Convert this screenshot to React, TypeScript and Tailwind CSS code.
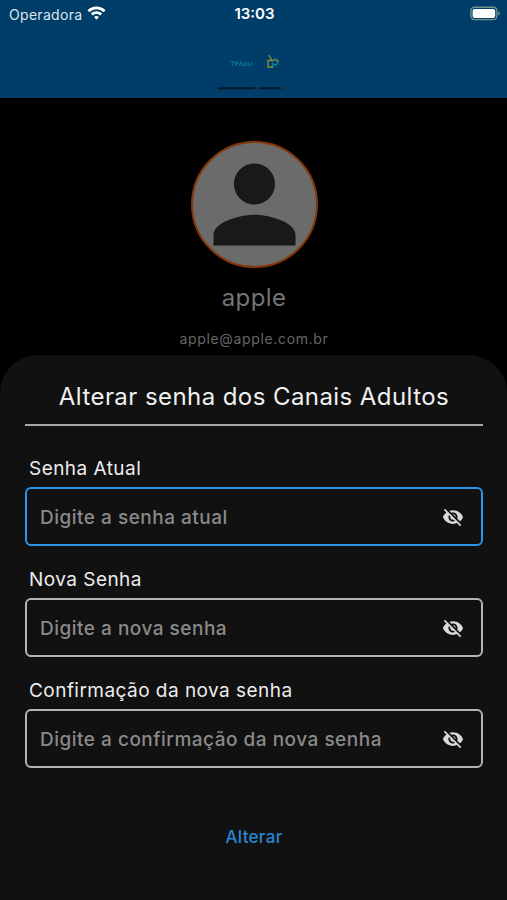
import { useState } from "react";
import { MdPerson, MdVisibility, MdVisibilityOff } from "react-icons/md";

interface PasswordFieldProps {
  id: string;
  label: string;
  placeholder: string;
  active?: boolean;
}

function StatusBar() {
  return (
    <div className="flex h-7 items-center justify-between pl-[9px] pr-[7px] text-white">
      <div className="flex w-[120px] items-center gap-[5px]">
        <span className="text-[14px] tracking-[0.3px] text-[#dce5ec]">Operadora</span>
        <svg width="19" height="15" viewBox="0 0 19 15" fill="white" className="mb-[2px]">
          <path d="M9.5 0.6c3.4 0 6.6 1.3 9 3.6l-1.9 2a10.3 10.3 0 0 0-14.2 0l-1.9-2c2.4-2.3 5.6-3.6 9-3.6z" />
          <path d="M9.5 5.3c2.1 0 4.1.8 5.6 2.2l-1.9 2a5.4 5.4 0 0 0-7.4 0l-1.9-2c1.5-1.4 3.5-2.2 5.6-2.2z" />
          <path d="M9.5 10c.9 0 1.7.3 2.4.9l-2.4 2.9-2.4-2.9c.7-.6 1.5-.9 2.4-.9z" />
        </svg>
      </div>
      <span className="text-[15px] font-semibold">13:03</span>
      <div className="flex w-[120px] justify-end">
        <svg width="30" height="15" viewBox="0 0 30 15" fill="none" className="mb-[2px]">
          <rect x="0.9" y="1.2" width="26" height="12.4" rx="3.5" stroke="#6f948f" strokeWidth="1.4" />
          <rect x="2.6" y="2.9" width="22.6" height="9" rx="1.8" fill="white" />
          <path d="M28.2 5.4c1.1.4 1.6 1.1 1.6 2s-.5 1.6-1.6 2z" fill="#6f948f" />
        </svg>
      </div>
    </div>
  );
}

function Logo() {
  return (
    <svg className="ml-[218px] mt-[24px]" width="70" height="40" viewBox="0 0 70 40" fill="none">
      <path
        d="M12.5 9.500h3l-1.500 4.500M17.500 14v-4h2v2h-2M21 14l2-4 1.500 4M26 10v3.500h2.500V10M30.500 10v3.500h1.500M33 14l1-4"
        stroke="#08759a"
        strokeWidth="1.1"
      />
      <path d="M58 7.500h-2M56 8.500h-6v6.500h5.500M50.500 3l3.500 5" stroke="#8a9038" strokeWidth="1.3" />
      <path d="M54.500 10.500v4M54 12l4.500 1M57 8h2.500v2.500l-2 3.500" stroke="#078697" strokeWidth="1.3" />
      <path d="M58 8.500h2v2" stroke="#8a9038" strokeWidth="1" />
      <path d="M0 36.200h37M41 36.200h22" stroke="#06192b" strokeWidth="2" />
      <path d="M37 36.200h4M63 36.200h6" stroke="#123451" strokeWidth="1.6" />
    </svg>
  );
}

function PasswordField({ id, label, placeholder, active = false }: PasswordFieldProps) {
  const [visible, setVisible] = useState(false);
  const Icon = visible ? MdVisibility : MdVisibilityOff;

  return (
    <div className="h-[111px]">
      <label
        htmlFor={id}
        className="block pl-[4px] pt-[1px] text-[19px] leading-[24px] tracking-[0.46px] text-[#ececec]"
      >
        {label}
      </label>
      <div
        className={`mt-[6px] flex h-[59px] w-[458px] items-center justify-between rounded-[6px] border-2 pl-[13px] pr-[17px] ${
          active ? "border-[#2e94e8]" : "border-[#b4b4b4]"
        }`}
      >
        <input
          id={id}
          type={visible ? "text" : "password"}
          placeholder={placeholder}
          className="min-w-0 flex-1 bg-transparent pt-[3px] text-[19px] font-medium tracking-[0.5px] text-[#8a8a8a] outline-none placeholder:text-[#8a8a8a]"
        />
        <button type="button" aria-label={label} onClick={() => setVisible(!visible)}>
          <Icon className="h-[22px] w-[22px] text-[#dadada]" />
        </button>
      </div>
    </div>
  );
}

export default function App() {
  return (
    <div className="flex h-[900px] w-[507px] flex-col overflow-hidden bg-black font-['Inter',sans-serif]">
      {/* Header */}
      <header className="h-[98px] shrink-0 bg-[#003d69]">
        <StatusBar />
        <Logo />
      </header>

      {/* Profile */}
      <section className="flex h-[257px] shrink-0 flex-col items-center pl-px pt-[43px]">
        <div className="flex h-[127px] w-[127px] shrink-0 items-center justify-center rounded-full border-2 border-[#853709] bg-[#6b6b6b]">
          <MdPerson className="h-[123px] w-[123px] shrink-0 text-[#191919]" />
        </div>
        <p className="mt-[14px] text-[24px] leading-[32px] tracking-[0.4px] text-[#747474]">apple</p>
        <p className="mt-[15px] text-[14px] leading-[20px] tracking-[0.65px] text-[#666666]">
          apple@apple.com.br
        </p>
      </section>

      {/* Bottom sheet */}
      <main className="flex flex-1 flex-col rounded-t-[38px] bg-[#111111] pl-[25px] pr-[24px] pt-[26px]">
        <h1 className="whitespace-nowrap text-center text-[24px] leading-[32px] tracking-[0.43px] text-[#f0f0f0]">
          Alterar senha dos Canais Adultos
        </h1>
        <div className="mt-[11px] h-[2px] bg-[#a5a8a8]" />

        <form className="mt-[30px]">
          <PasswordField
            id="current"
            label="Senha Atual"
            placeholder="Digite a senha atual"
            active
          />
          <PasswordField id="next" label="Nova Senha" placeholder="Digite a nova senha" />
          <PasswordField
            id="confirm"
            label="Confirmação da nova senha"
            placeholder="Digite a confirmação da nova senha"
          />
          <button
            type="button"
            className="mx-auto mt-[36px] block text-[17px] font-medium leading-[24px] tracking-[0.3px] text-[#2787d5]"
          >
            Alterar
          </button>
        </form>
      </main>
    </div>
  );
}
